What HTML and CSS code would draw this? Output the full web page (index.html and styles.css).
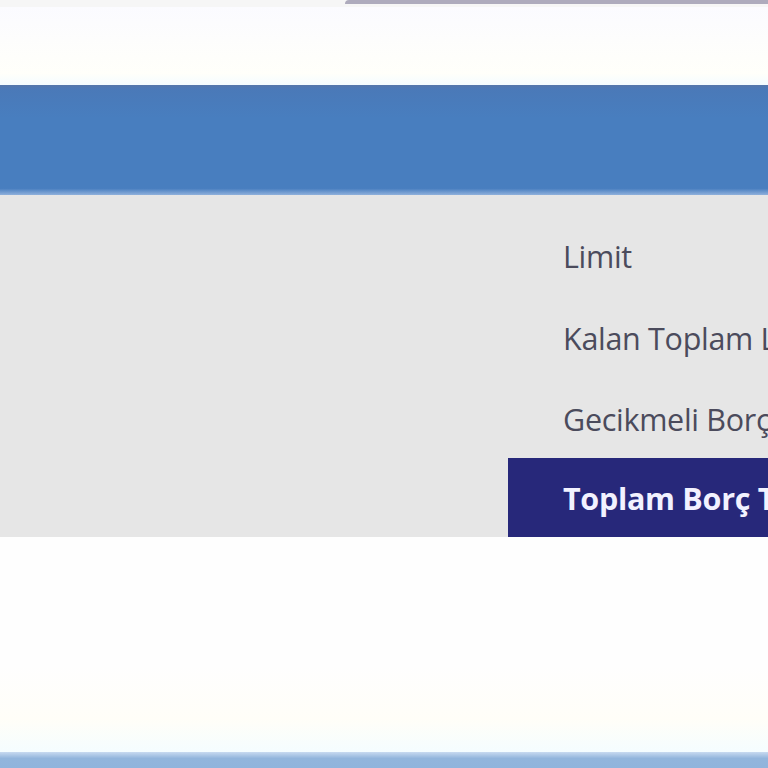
FILE: index.html
```html
<!DOCTYPE html>
<html lang="tr">
<head>
<meta charset="utf-8">
<link rel="stylesheet" href="styles.css">
</head>
<body>
<div class="topbar"><div class="tab"></div></div>
<div class="spacer"></div>
<div class="header"></div>
<div class="panel">
  <div class="list">
    <div class="row">Limit</div>
    <div class="row">Kalan Toplam Limit</div>
    <div class="row">Gecikmeli Borç</div>
    <div class="row active">Toplam Borç Tutarı</div>
  </div>
</div>
<div class="gap"></div>
<div class="footer"></div>
</body>
</html>
```
FILE: styles.css
```css
html, body { margin: 0; padding: 0; }
body {
  width: 768px; height: 768px; overflow: hidden;
  background: #fefefe;
  font-family: "Open Sans", "Noto Sans", sans-serif;
  display: flex; flex-direction: column;
}
.topbar { height: 7px; background: #f6f6f6; display: flex; }
.tab { margin-left: 345px; flex: 1; height: 4px; background: #aeabbd; border-radius: 4px 0 0 0; }
.spacer { height: 78px; background: linear-gradient(#fbfbff, #fffffa 85%, #f4fcff); }
.header {
  height: 110px;
  background: linear-gradient(#5577aa 0px, #4a79b8 4px, #487ebf 30%, #487ebf 94%, #8fb0dc 100%);
}
.panel {
  height: 342px; background: #e6e6e6;
  display: flex; justify-content: flex-end;
}
.list { width: 260px; padding-top: 20px; display: flex; flex-direction: column; }
.row {
  height: 82px; display: flex; align-items: center;
  padding-left: 55px; white-space: nowrap; overflow: hidden;
  font-size: 30.5px; color: #4b4b5c; letter-spacing: -0.3px;
}
.row:nth-child(3) { height: 79px; }
.row.active {
  height: 79px;
  background: #27287a; color: #f2f2ff; font-weight: 700;
}
.gap { height: 215px; background: linear-gradient(#fefefe, #fefefe 60%, #fffef8 85%, #f5fdff); }
.footer { height: 16px; background: linear-gradient(#c8daf0, #92b5dc 40%, #90b4dc); }
```
